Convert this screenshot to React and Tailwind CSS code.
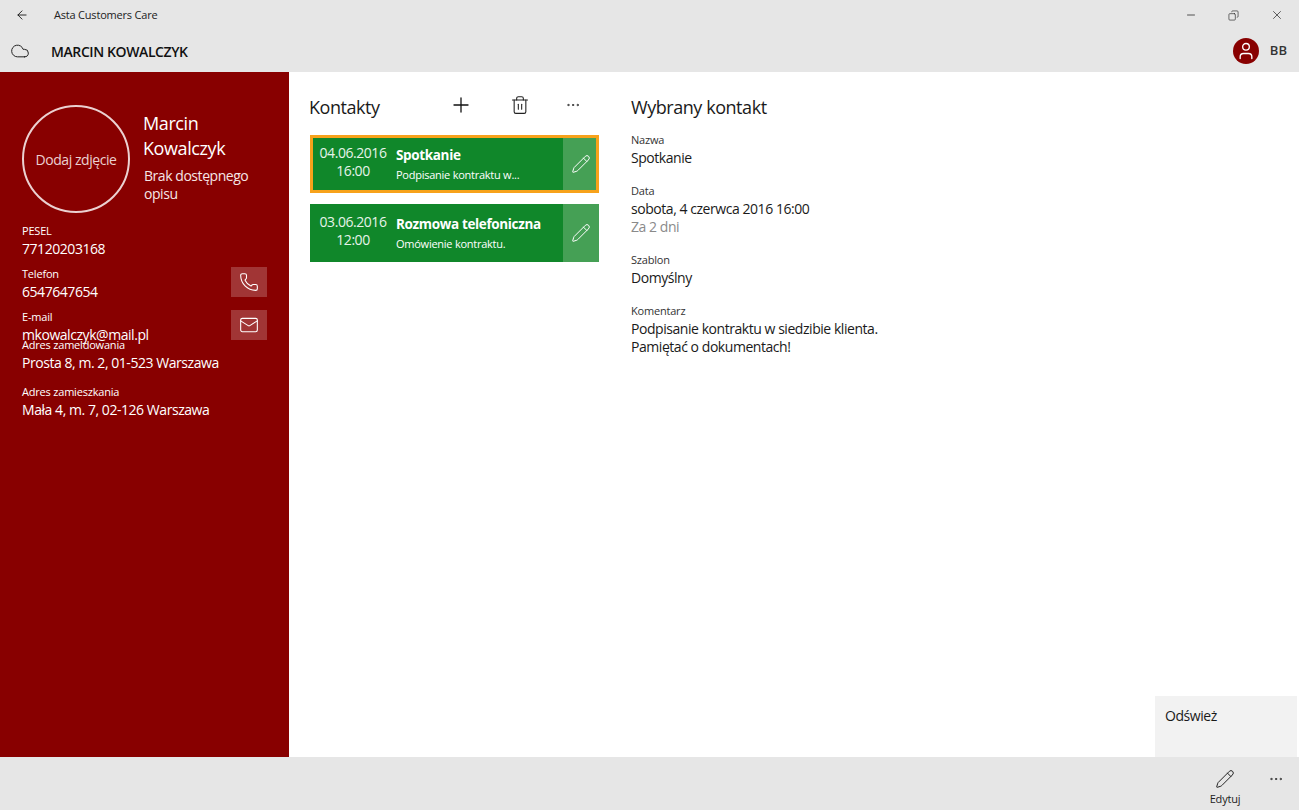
import React from 'react';
import { ArrowLeft, Cloud, Plus, Trash2, Pencil, Phone, Mail, Minus, X, Copy, Ellipsis, User } from 'lucide-react';

const font = { fontFamily: '"Open Sans", "Noto Sans", sans-serif' };

function Field({ label, value, className = '' }) {
  return (
    <div className={className}>
      <div className="text-[11px] leading-[14px] tracking-[-0.2px]">{label}</div>
      <div className="mt-px text-[14px] leading-[20px] tracking-[-0.45px]">{value}</div>
    </div>
  );
}

function ActionField({ label, value, icon: Icon, className = '' }) {
  return (
    <div className={`flex items-start justify-between pr-[22px] ${className}`}>
      <Field label={label} value={value} />
      <button type="button" className="flex h-[30px] w-[36px] items-center justify-center bg-[#a13535]">
        <Icon className="h-[20px] w-[20px] text-white" strokeWidth={1.3} />
      </button>
    </div>
  );
}

function ContactCard({ date, time, title, text, selected }) {
  return (
    <div className={`relative flex h-[58px] w-[289px] bg-[#10872a] text-white ${selected ? 'mb-[11px]' : ''}`}>
      <div className="w-[86px] pt-[9px] text-center text-[14px] leading-[18px] tracking-[-0.45px] text-[#e6f3e9]">
        <div>{date}</div>
        <div>{time}</div>
      </div>
      <div className="flex-1 pt-[11px]">
        <div className="text-[13.5px] font-bold leading-[18px] tracking-[-0.35px]">{title}</div>
        <div className="mt-[3px] text-[11px] leading-[16px] tracking-[-0.25px]">{text}</div>
      </div>
      <div className="flex w-[36px] items-center justify-center bg-[#45a055]">
        <Pencil className="h-[20px] w-[20px]" strokeWidth={1.2} />
      </div>
      {selected && <div className="pointer-events-none absolute inset-0 border-[3px] border-[#f7a21b]" />}
    </div>
  );
}

function DetailField({ label, children, className = '' }) {
  return (
    <div className={className}>
      <div className="text-[11px] leading-[14px] tracking-[-0.2px] text-[#333]">{label}</div>
      <div className="mt-[2px] text-[14px] leading-[18px] tracking-[-0.45px] text-[#1a1a1a]">{children}</div>
    </div>
  );
}

export default function App() {
  return (
    <div style={font} className="relative flex h-[810px] w-[1299px] flex-col overflow-hidden bg-white text-black">
      {/* title bar */}
      <div className="flex h-[30px] shrink-0 items-center bg-[#e6e6e6]">
        <ArrowLeft className="ml-[15px] h-[14px] w-[14px] text-[#111]" strokeWidth={1.5} />
        <span className="ml-[25px] text-[11px] tracking-[-0.2px] text-[#222]">Asta Customers Care</span>
        <div className="ml-auto flex items-center gap-[31px] pr-[15px] text-[#222]">
          <Minus className="h-[12px] w-[12px]" strokeWidth={1.5} />
          <Copy className="h-[11px] w-[11px] -scale-x-100" strokeWidth={1.4} />
          <X className="h-[14px] w-[14px]" strokeWidth={1.2} />
        </div>
      </div>

      {/* header */}
      <div className="flex h-[42px] shrink-0 items-center bg-[#e6e6e6]">
        <Cloud className="ml-[10px] h-[20px] w-[20px] text-[#222]" strokeWidth={1.2} />
        <span className="ml-[21px] text-[14px] font-semibold tracking-[-0.4px] text-[#111]">MARCIN KOWALCZYK</span>
        <div className="ml-auto flex items-center pr-[12px]">
          <div className="flex h-[26px] w-[26px] items-center justify-center rounded-full bg-[#880000]">
            <User className="h-[20px] w-[20px] text-white" strokeWidth={1.6} />
          </div>
          <span className="ml-[11px] text-[13px] font-semibold text-[#333]">BB</span>
        </div>
      </div>

      <div className="flex min-h-0 flex-1">
        {/* sidebar */}
        <aside className="w-[289px] shrink-0 bg-[#880000] pl-[22px] pt-[33px] text-white">
          <div className="flex">
            <div className="flex h-[108px] w-[108px] shrink-0 items-center justify-center rounded-full border-2 border-[#ebd1d1] text-[14px] tracking-[-0.45px] text-[#ebd1d1]">
              Dodaj zdjęcie
            </div>
            <div className="ml-[13px] pt-[6px]">
              <div className="text-[18px] leading-[25px] tracking-[-0.4px]">Marcin<br />Kowalczyk</div>
              <div className="ml-px mt-[6px] w-[125px] text-[14px] leading-[18px] tracking-[-0.45px] text-[#f6e6e6]">Brak dostępnego opisu</div>
            </div>
          </div>
          <Field className="mt-[11px]" label="PESEL" value="77120203168" />
          <ActionField className="mt-[8px]" label="Telefon" value="6547647654" icon={Phone} />
          <ActionField className="mt-[8px]" label="E-mail" value="mkowalczyk@mail.pl" icon={Mail} />
          <Field className="-mt-[7px]" label="Adres zameldowania" value="Prosta 8, m. 2, 01-523 Warszawa" />
          <Field className="mt-[12px]" label="Adres zamieszkania" value="Mała 4, m. 7, 02-126 Warszawa" />
        </aside>

        {/* contacts */}
        <section className="w-[342px] shrink-0 pl-[20px] pt-[20px]">
          <div className="flex h-[30px] w-[290px] items-center">
            <h2 className="text-[18px] tracking-[-0.45px] text-[#1a1a1a]">Kontakty</h2>
            <Plus className="ml-[69px] -mt-[4px] h-[24px] w-[24px] text-[#111]" strokeWidth={1.3} />
            <Trash2 className="ml-[37px] -mt-[4px] h-[20px] w-[20px] text-[#222]" strokeWidth={1.3} />
            <Ellipsis className="ml-[35px] -mt-[4px] h-[16px] w-[16px] text-[#333]" strokeWidth={1.5} />
          </div>
          <div className="ml-px mt-[13px]">
            <ContactCard selected date="04.06.2016" time="16:00" title="Spotkanie" text="Podpisanie kontraktu w..." />
            <ContactCard date="03.06.2016" time="12:00" title="Rozmowa telefoniczna" text="Omówienie kontraktu." />
          </div>
        </section>

        {/* details */}
        <section className="flex-1 pt-[20px]">
          <h2 className="flex h-[30px] items-center text-[18px] tracking-[-0.45px] text-[#1a1a1a]">Wybrany kontakt</h2>
          <DetailField className="mt-[11px]" label="Nazwa">Spotkanie</DetailField>
          <DetailField className="mt-[17px]" label="Data">
            sobota, 4 czerwca 2016 16:00
            <div className="text-[#8a8a8a]">Za 2 dni</div>
          </DetailField>
          <DetailField className="mt-[17px]" label="Szablon">Domyślny</DetailField>
          <DetailField className="mt-[17px]" label="Komentarz">
            Podpisanie kontraktu w siedzibie klienta.
            <br />
            Pamiętać o dokumentach!
          </DetailField>
        </section>
      </div>

      {/* bottom app bar */}
      <div className="flex h-[53px] shrink-0 justify-end bg-[#e6e6e6]">
        <div className="flex w-[60px] flex-col items-center pt-[12px]">
          <Pencil className="h-[20px] w-[20px] text-[#222]" strokeWidth={1.2} />
          <span className="mt-[2px] text-[11px] tracking-[-0.2px] text-[#222]">Edytuj</span>
        </div>
        <div className="w-[44px] pl-[13px] pt-[14px]">
          <Ellipsis className="h-[16px] w-[16px] text-[#333]" strokeWidth={1.5} />
        </div>
      </div>

      {/* overflow menu */}
      <div className="absolute bottom-[53px] left-[1155px] h-[61px] w-[142px] bg-[#f2f2f2] pl-[10px] pt-[9px] text-[14px] tracking-[-0.45px] text-[#1a1a1a]">
        Odśwież
      </div>
    </div>
  );
}
